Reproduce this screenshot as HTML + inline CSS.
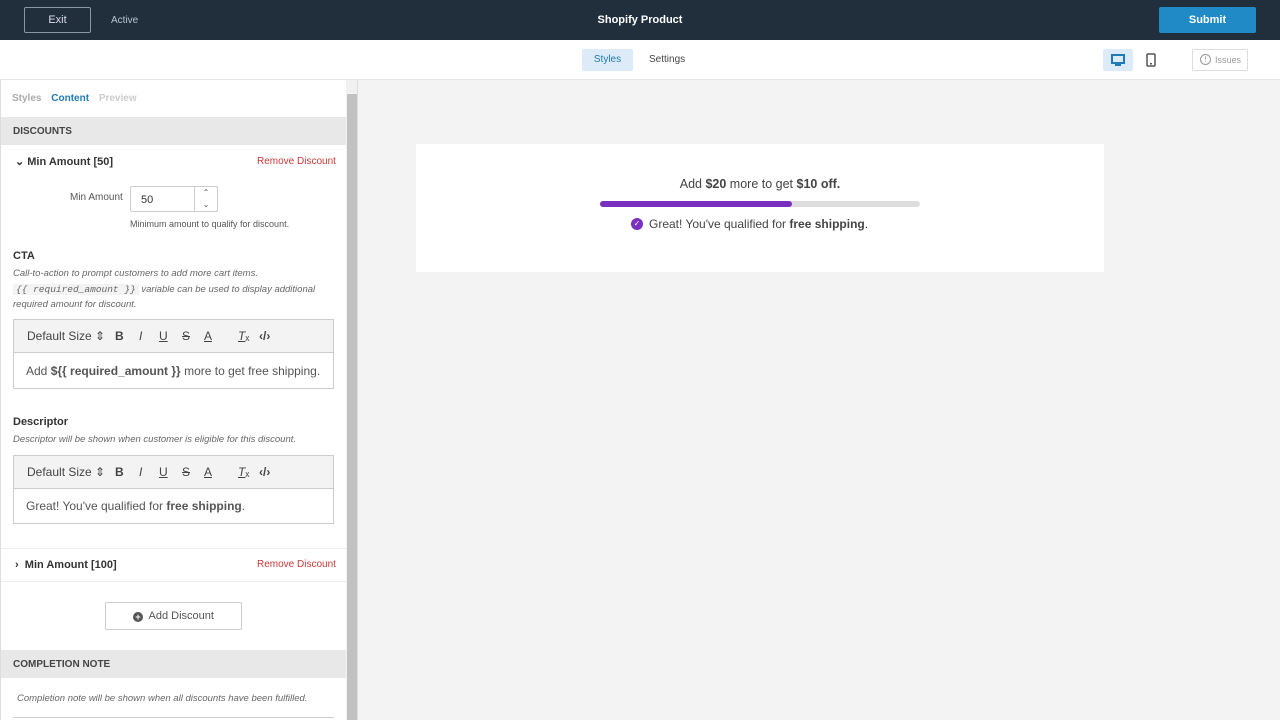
<!DOCTYPE html>
<html><head><meta charset="utf-8"><style>
*{box-sizing:border-box;margin:0;padding:0}
body{width:1280px;height:720px;overflow:hidden;background:#f3f3f3;font-family:"Liberation Sans",sans-serif;position:relative;color:#333}
.a{position:absolute}
.top{left:0;top:0;width:1280px;height:40px;background:#212f3d}
.sub{left:0;top:40px;width:1280px;height:40px;background:#fff;border-bottom:1px solid #e4e4e4}
.side{left:0;top:80px;width:346px;height:640px;background:#fff;border-left:1px solid #ddd}
.sb{left:346px;top:80px;width:12px;height:640px;background:#f1f1f1;border-right:1px solid #ddd}
.sec{left:1px;width:345px;height:28px;background:#e8e8e8;font-size:10px;font-weight:bold;color:#444;padding-left:12px;line-height:28px}
.tb{border:1px solid #ccc;background:#f3f3f3;height:34px;font-size:12px;color:#444;position:absolute}
.tb span{position:absolute;top:9px}
.ed{border:1px solid #ccc;border-top:none;background:#fff;height:36px;font-size:12px;color:#555;padding-left:12px;line-height:36px}
.it{font-style:italic;font-size:9.5px;color:#666}
.red{color:#c9383a;font-size:10px}
.h{font-size:11px;font-weight:bold;color:#333}
</style></head><body>
<div class="a top"></div>
<div class="a" style="left:24px;top:7px;width:67px;height:26px;border:1px solid #8a97a3;border-radius:2px;color:#dde;font-size:11px;text-align:center;line-height:24px">Exit</div>
<div class="a" style="left:111px;top:15px;color:#b8c4cf;font-size:10px">Active</div>
<div class="a" style="left:0;width:1280px;top:14px;text-align:center;color:#fff;font-size:11px;font-weight:bold">Shopify Product</div>
<div class="a" style="left:1159px;top:7px;width:97px;height:26px;background:#1f8ac5;border-radius:2px;color:#fff;font-size:11px;font-weight:bold;text-align:center;line-height:26px">Submit</div>
<div class="a sub"></div>
<div class="a" style="left:582px;top:49px;width:51px;height:22px;background:#dcebf7;border-radius:2px;color:#1f7ab5;font-size:10px;text-align:center;line-height:22px">Styles</div>
<div class="a" style="left:649px;top:54px;font-size:10px;color:#444">Settings</div>
<div class="a" style="left:1103px;top:49px;width:30px;height:22px;background:#dcebf7;border-radius:2px"></div>
<svg class="a" style="left:1111px;top:54px" width="14" height="13"><rect x="1" y="1" width="12" height="8" fill="none" stroke="#1f7ab5" stroke-width="2"/><rect x="4" y="10" width="6" height="2" fill="#1f7ab5"/></svg>
<svg class="a" style="left:1146px;top:53px" width="10" height="14"><rect x="1" y="1" width="8" height="12" rx="1" fill="none" stroke="#555" stroke-width="1.5"/><rect x="4" y="10" width="2" height="1.5" fill="#555"/></svg>
<div class="a" style="left:1192px;top:49px;width:56px;height:22px;border:1px solid #ddd;border-radius:2px;color:#999;font-size:9px;line-height:20px;padding-left:22px">Issues</div>
<div class="a" style="left:1200px;top:54px;width:11px;height:11px;border:1.3px solid #999;border-radius:50%;font-size:8px;color:#999;text-align:center;line-height:9px">!</div>

<div class="a side"></div>
<div class="a sb"><div style="margin:14px 1px 0;height:626px;background:#c1c1c1;width:10px"></div></div>
<div class="a" style="left:12px;top:93px;font-size:10px;color:#aaa;font-weight:bold">Styles <span style="color:#1f7ab5;margin-left:7px">Content</span> <span style="margin-left:7px;color:#ccc">Preview</span></div>
<div class="a sec" style="top:117px;line-height:29px">DISCOUNTS</div>
<div class="a h" style="left:15px;top:155px">⌄&nbsp;Min Amount [50]</div>
<div class="a red" style="left:257px;top:156px">Remove Discount</div>
<div class="a" style="left:70px;top:192px;font-size:10px;color:#555">Min Amount</div>
<div class="a" style="left:130px;top:186px;width:88px;height:26px;border:1px solid #ccc;border-radius:2px;font-size:11px;padding-left:10px;line-height:26px">50</div>
<div class="a" style="left:194px;top:186px;width:24px;height:26px;border:1px solid #ccc;border-radius:0 2px 2px 0;font-size:8px;text-align:center;line-height:12px;color:#555">⌃<br>⌄</div>
<div class="a" style="left:130px;top:219px;font-size:9px;color:#555">Minimum amount to qualify for discount.</div>
<div class="a h" style="left:13px;top:250px">CTA</div>
<div class="a it" style="left:13px;top:266px;line-height:15.5px">Call-to-action to prompt customers to add more cart items.<br><span style="background:#f3f3f3;font-family:'Liberation Mono',monospace;padding:0 3px">{{ required_amount }}</span> variable can be used to display additional<br>required amount for discount.</div>
<div class="tb" style="left:13px;top:319px;width:321px"><span style="left:13px">Default Size ⇕</span><span style="left:101px"><b>B</b></span><span style="left:125px"><i>I</i></span><span style="left:145px"><u>U</u></span><span style="left:168px"><s>S</s></span><span style="left:190px"><u>A</u></span><span style="left:224px"><i><u>T</u></i>ₓ</span><span style="left:245px"><b>‹/›</b></span></div>
<div class="a ed" style="left:13px;top:353px;width:321px">Add <b>${{ required_amount }}</b> more to get free shipping.</div>
<div class="a h" style="left:13px;top:416px">Descriptor</div>
<div class="a it" style="left:13px;top:434px">Descriptor will be shown when customer is eligible for this discount.</div>
<div class="tb" style="left:13px;top:455px;width:321px"><span style="left:13px">Default Size ⇕</span><span style="left:101px"><b>B</b></span><span style="left:125px"><i>I</i></span><span style="left:145px"><u>U</u></span><span style="left:168px"><s>S</s></span><span style="left:190px"><u>A</u></span><span style="left:224px"><i><u>T</u></i>ₓ</span><span style="left:245px"><b>‹/›</b></span></div>
<div class="a ed" style="left:13px;top:489px;width:321px;height:35px;line-height:34px">Great! You've qualified for <b>free shipping</b>.</div>
<div class="a" style="left:1px;top:548px;width:345px;border-top:1px solid #eee"></div>
<div class="a h" style="left:15px;top:559px">›&nbsp; Min Amount [100]</div>
<div class="a red" style="left:257px;top:559px">Remove Discount</div>
<div class="a" style="left:1px;top:581px;width:345px;border-top:1px solid #eee"></div>
<div class="a" style="left:105px;top:602px;width:137px;height:28px;border:1px solid #ccc;border-radius:2px;font-size:11px;color:#555;text-align:center;line-height:26px"><span style="display:inline-block;width:10px;height:10px;border-radius:50%;background:#555;color:#fff;font-size:9px;line-height:10px;font-weight:bold;vertical-align:-1px">+</span>&nbsp; Add Discount</div>
<div class="a sec" style="top:650px;line-height:29px">COMPLETION NOTE</div>
<div class="a it" style="left:17px;top:693px">Completion note will be shown when all discounts have been fulfilled.</div>
<div class="a" style="left:13px;top:717px;width:321px;border-top:1px solid #ccc"></div>

<div class="a" style="left:416px;top:144px;width:688px;height:128px;background:#fff"></div>
<div class="a" style="left:416px;width:688px;top:177px;text-align:center;font-size:12.5px;color:#444">Add <b>$20</b> more to get <b>$10 off.</b></div>
<div class="a" style="left:600px;top:201px;width:320px;height:6px;border-radius:3px;background:#ddd"><div style="width:192px;height:6px;border-radius:3px;background:#7b2fbe"></div></div>
<div class="a" style="left:631px;top:218px;width:12px;height:12px;border-radius:50%;background:#7b2fbe;color:#fff;font-size:8px;text-align:center;line-height:12px">✓</div>
<div class="a" style="left:649px;top:217px;font-size:12px;color:#444">Great! You've qualified for <b>free shipping</b>.</div>
</body></html>
